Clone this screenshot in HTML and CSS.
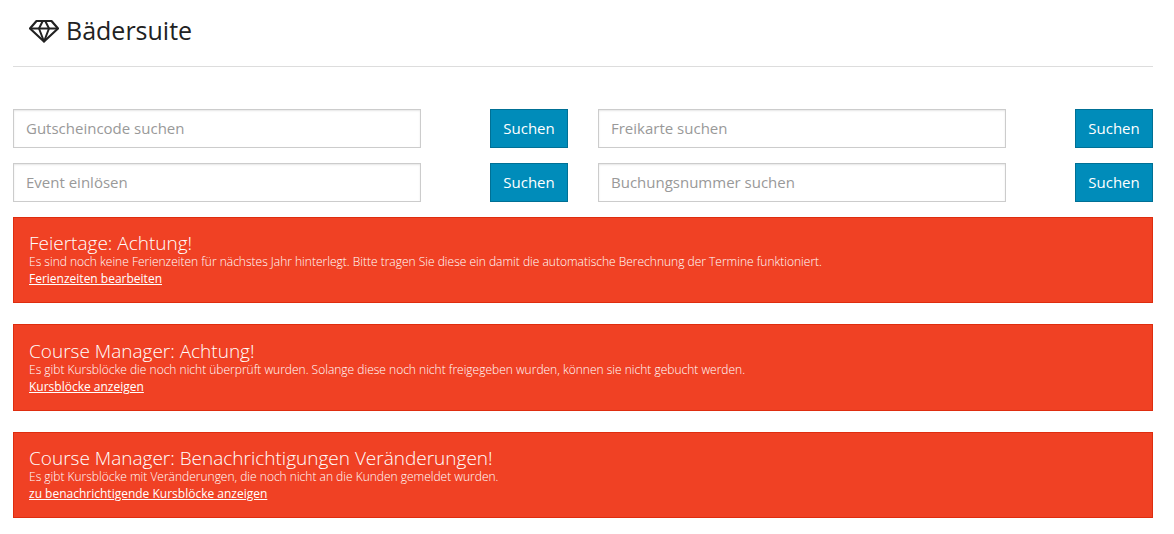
FILE: index.html
```html
<!DOCTYPE html>
<html lang="de">
<head>
<meta charset="utf-8">
<title>Bädersuite</title>
<link rel="stylesheet" href="styles.css">
</head>
<body>
<div class="page">
  <header class="header">
    <svg class="logo" viewBox="0 0 30 24" width="30" height="24" fill="none" stroke="#222" stroke-width="2.200" stroke-linejoin="round">
      <path d="M7.500 2H22.500L29 9.500L15 22.500L1 9.500Z"/>
      <path d="M1 9.500H29" stroke-width="2"/>
      <path d="M10 9.500L15 22.500L20 9.500L16.500 2.500M10 9.500L13.500 2.500" stroke-width="2"/>
    </svg>
    <h1 class="title">Bädersuite</h1>
  </header>
  <form class="search-grid">
    <div class="search-row"><input class="field" placeholder="Gutscheincode suchen"><button type="button" class="btn">Suchen</button></div>
    <div class="search-row"><input class="field" placeholder="Freikarte suchen"><button type="button" class="btn">Suchen</button></div>
    <div class="search-row"><input class="field" placeholder="Event einlösen"><button type="button" class="btn">Suchen</button></div>
    <div class="search-row"><input class="field" placeholder="Buchungsnummer suchen"><button type="button" class="btn">Suchen</button></div>
  </form>
  <section class="alerts">
    <div class="alert alert-a">
      <h2 class="alert-title">Feiertage: Achtung!</h2>
      <p class="alert-text">Es sind noch keine Ferienzeiten für nächstes Jahr hinterlegt. Bitte tragen Sie diese ein damit die automatische Berechnung der Termine funktioniert.</p>
      <a class="alert-link" href="#">Ferienzeiten bearbeiten</a>
    </div>
    <div class="alert alert-b">
      <h2 class="alert-title">Course Manager: Achtung!</h2>
      <p class="alert-text">Es gibt Kursblöcke die noch nicht überprüft wurden. Solange diese noch nicht freigegeben wurden, können sie nicht gebucht werden.</p>
      <a class="alert-link" href="#">Kursblöcke anzeigen</a>
    </div>
    <div class="alert alert-a">
      <h2 class="alert-title">Course Manager: Benachrichtigungen Veränderungen!</h2>
      <p class="alert-text">Es gibt Kursblöcke mit Veränderungen, die noch nicht an die Kunden gemeldet wurden.</p>
      <a class="alert-link" href="#">zu benachrichtigende Kursblöcke anzeigen</a>
    </div>
  </section>
</div>
</body>
</html>
```
FILE: styles.css
```css
* { box-sizing: border-box; }
html, body { margin: 0; padding: 0; background: #fff; }
body { font-family: "Open Sans", sans-serif; color: #222; }
.page { padding: 0 21px 0 13px; }
.header { display: flex; align-items: center; gap: 7px; height: 67px; padding: 0 0 6px 16px; border-bottom: 1px solid #ddd; }
.logo { display: block; flex: none; margin-top: 2px; }
.title { margin: 0; font-size: 25px; font-weight: 400; line-height: 32px; color: #222; }
.search-grid { display: grid; grid-template-columns: 1fr 1fr; column-gap: 30px; row-gap: 15px; margin-top: 42px; }
.search-row { display: flex; justify-content: space-between; height: 39px; }
.field { width: 408px; height: 39px; padding: 0 12px 2px; border: 1px solid #ccc; box-shadow: inset 0 1px 2px rgba(0,0,0,.1); font-family: "Open Sans", sans-serif; font-size: 15px; color: #222; background: #fff; border-radius: 0; outline: none; }
.field::placeholder { color: #999; opacity: 1; }
.btn { width: 78px; height: 39px; padding: 0 0 2px; border: 1px solid #007095; background: #008cba; color: #fff; font-family: "Open Sans", sans-serif; font-size: 15px; border-radius: 0; }
.alerts { display: flex; flex-direction: column; gap: 21px; margin-top: 15px; }
.alert { padding: 13px 15px 0; background: #f04124; border: 1px solid #de2d0f; color: #fff; }
.alert-a { height: 86px; }
.alert-b { height: 87px; padding-top: 14px; }
.alert-title { margin: 0; font-size: 19px; font-weight: 300; line-height: 24px; }
.alert-text { margin: 0; font-size: 12px; font-weight: 300; line-height: 14px; }
.alert-link { display: inline-block; font-size: 12px; line-height: 20px; font-weight: 400; color: #fff; text-decoration: underline; vertical-align: top; }
```
